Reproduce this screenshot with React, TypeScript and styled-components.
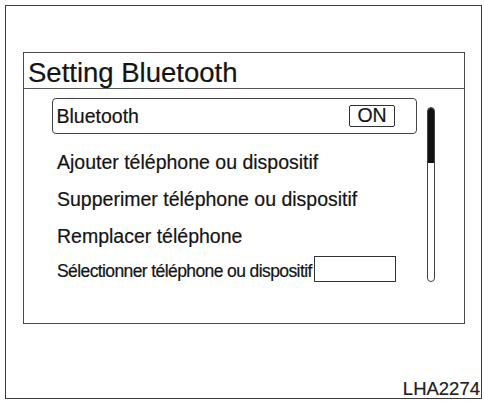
import React, { FC } from 'react';
import styled, { createGlobalStyle } from 'styled-components';

const GlobalStyle = createGlobalStyle`
  html, body {
    margin: 0;
    padding: 0;
    background: #ffffff;
  }
  body {
    font-family: "Liberation Sans", Arial, sans-serif;
    color: #141414;
    -webkit-text-stroke: 0.2px #141414;
  }
`;

const Frame = styled.div`
  box-sizing: border-box;
  width: 477px;
  height: 394px;
  margin: 5px 0 0 5px;
  border: 1.5px solid #3c3c3c;
  padding: 45.5px 1px 0 16.5px;
  display: flex;
  flex-direction: column;
`;

const Panel = styled.section`
  box-sizing: border-box;
  width: 442px;
  height: 272px;
  border: 1.5px solid #4a4a4a;
  display: flex;
  flex-direction: column;
`;

const TitleBar = styled.div`
  padding: 5px 0 0 4.5px;
  font-size: 27.5px;
  line-height: 30px;
  border-bottom: 1.5px solid #555;
`;

const Body = styled.div`
  display: flex;
  padding: 9px 0 0 28px;
`;

const List = styled.div`
  width: 365px;
  display: flex;
  flex-direction: column;
`;

const SelectedRow = styled.div`
  box-sizing: border-box;
  height: 36px;
  border: 1.5px solid #444;
  border-radius: 4px;
  padding: 0 20.5px 0 4px;
  display: flex;
  align-items: center;
  justify-content: space-between;
  font-size: 19.5px;
  line-height: 22px;
`;

const OnBadge = styled.span`
  box-sizing: border-box;
  width: 46px;
  height: 22px;
  border: 1.5px solid #333;
  border-radius: 2px;
  display: flex;
  align-items: center;
  justify-content: center;
  font-size: 19.5px;
  line-height: 19px;
`;

const Item = styled.div`
  padding-left: 5.5px;
  font-size: 19.5px;
  line-height: 37px;
  white-space: nowrap;
`;

const FirstItem = styled(Item)`
  margin-top: 10px;
`;

const SmallRow = styled.div`
  margin-top: 1px;
  padding-left: 5.5px;
  height: 26px;
  display: flex;
  align-items: flex-end;
`;

const SmallLabel = styled.span`
  font-size: 17.5px;
  letter-spacing: -0.6px;
  line-height: 22px;
  white-space: nowrap;
`;

const EmptyField = styled.span`
  box-sizing: border-box;
  width: 82px;
  height: 26px;
  margin-left: 2.5px;
  border: 1.5px solid #333;
`;

const ScrollTrack = styled.div`
  box-sizing: border-box;
  width: 8px;
  height: 175px;
  margin: 9px 0 0 10px;
  border: 1.5px solid #444;
  border-radius: 4px;
  overflow: hidden;
`;

const ScrollThumb = styled.div`
  height: 55px;
  background: #111;
`;

const Code = styled.div`
  margin-top: auto;
  align-self: flex-end;
  font-size: 18.5px;
  line-height: 18px;
  color: #222;
`;

const App: FC = () => {
  return (
    <>
      <GlobalStyle />
      <Frame>
        <Panel>
          <TitleBar>Setting Bluetooth</TitleBar>
          <Body>
            <List>
              <SelectedRow>
                <span>Bluetooth</span>
                <OnBadge>ON</OnBadge>
              </SelectedRow>
              <FirstItem>Ajouter téléphone ou dispositif</FirstItem>
              <Item>Supperimer téléphone ou dispositif</Item>
              <Item>Remplacer téléphone</Item>
              <SmallRow>
                <SmallLabel>Sélectionner téléphone ou dispositif</SmallLabel>
                <EmptyField />
              </SmallRow>
            </List>
            <ScrollTrack>
              <ScrollThumb />
            </ScrollTrack>
          </Body>
        </Panel>
        <Code>LHA2274</Code>
      </Frame>
    </>
  );
};

export default App;
